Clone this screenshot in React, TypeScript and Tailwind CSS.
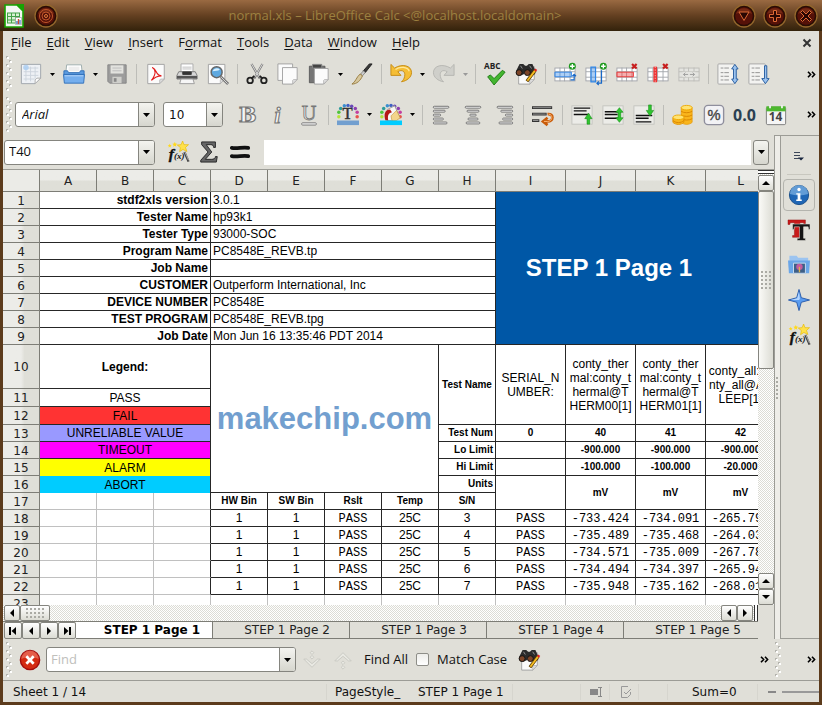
import React from 'react';

type Kids = { children?: React.ReactNode };

const ui = "font-['Open_Sans',sans-serif]";
const dv = "font-['DejaVu_Sans',sans-serif]";

function Ico({ children, size = 'size-[22px]' }: Kids & { size?: string }) {
  return (
    <svg viewBox="0 0 24 24" className={`${size} shrink-0 overflow-visible`} fill="none" aria-hidden="true">
      {children}
    </svg>
  );
}

function Tool({ label, children }: Kids & { label: string }) {
  return (
    <button type="button" aria-label={label} className="flex h-8 w-[31px] shrink-0 items-center justify-center">
      {children}
    </button>
  );
}

function Caret({ dim = false }: { dim?: boolean }) {
  return (
    <svg viewBox="0 0 5 3" className="h-[3px] w-[5px]" aria-hidden="true">
      <path d="M0 0h5L2.5 3z" fill={dim ? '#999' : '#000'} />
    </svg>
  );
}

function Drop({ label, dim }: { label: string; dim?: boolean }) {
  return (
    <button type="button" aria-label={label} className="flex h-8 w-3 shrink-0 items-center justify-center">
      <Caret dim={dim} />
    </button>
  );
}

const Sep = () => (
  <span className="flex w-2 shrink-0 justify-center">
    <span className="h-5 w-px bg-[#bdbdb8]" />
  </span>
);

function Grip() {
  const dots = Array.from({ length: 9 }, (_, i) => i);
  return (
    <svg viewBox="0 0 8 36" className="ml-[2px] h-9 w-2 shrink-0" aria-hidden="true">
      {dots.map((i) => (
        <g key={i}>
          <rect x={i % 2 ? 4 : 1} y={i * 4} width="2" height="2" fill="#b4b4ae" />
          <rect x={(i % 2 ? 4 : 1) + 1} y={i * 4 + 1} width="2" height="2" fill="#fff" />
        </g>
      ))}
    </svg>
  );
}

function More({ label }: { label: string }) {
  return (
    <button type="button" aria-label={label} className="flex h-8 w-[15px] shrink-0 items-center justify-center">
      <svg viewBox="0 0 9 7" className="h-[7px] w-[9px]" fill="none" stroke="#000" strokeWidth="1.6" aria-hidden="true">
        <path d="M1 .7 3.6 3.5 1 6.3M5 .7l2.6 2.8L5 6.3" />
      </svg>
    </button>
  );
}

const Page = ({ x = 3, y = 2, w = 17, h = 19 }: { x?: number; y?: number; w?: number; h?: number }) => (
  <>
    <path d={`M${x} ${y}h${w}v${h - 5}l-5 5h-${w - 5}z`} fill="#fbfbfb" stroke="#a0a0a0" />
    <path d={`M${x + w} ${y + h - 5}l-5 5v-4l1-1z`} fill="#ddd" stroke="#aaa" strokeWidth=".7" />
  </>
);

function CalcLogo() {
  return (
    <svg viewBox="0 0 20 24" className="h-6 w-5" aria-hidden="true">
      <path d="M1 1h12l6 6v16H1z" fill="#f4f7f4" stroke="#18a303" strokeWidth="1.6" />
      <path d="M12 0h8v8z" fill="#18a303" />
      <path d="M3 8.500h13v11H3z" fill="#43a047" />
      <path d="M4 9.500h3v2.500H4zm4 0h3v2.500H8zm4 0h3v2.500h-3zM4 13h3v2.500H4zm4 0h3v2.500H8zm-4 3.500h3v2H4zm4 0h3v2H8z" fill="#d9f0d4" />
      <path d="M11.500 13.500h6v7h-6z" fill="#fff" stroke="#999" strokeWidth=".6" />
      <path d="M13 17v3" stroke="#3b78c4" strokeWidth="1.400" />
      <path d="M14.500 15v5" stroke="#d24a2c" strokeWidth="1.400" />
      <path d="M16 16v4" stroke="#3b78c4" strokeWidth="1.200" />
    </svg>
  );
}

function Orb({ children }: Kids) {
  return (
    <svg viewBox="0 0 24 24" className="size-6" aria-hidden="true">
      <circle cx="12" cy="12" r="11" fill="#241305" stroke="#94662c" strokeWidth="1.300" />
      <circle cx="12" cy="12" r="9.300" fill="#551108" stroke="#2c0a04" />
      <path d="M4 10a8.500 8.500 0 0 1 16 0c-4-2-12-2-16 0z" fill="#8a3a1c" opacity=".6" />
      {children}
    </svg>
  );
}

function Binoculars() {
  return (
    <Ico>
      <Page x={4} y={4} w={17} h={19} />
      <path d="M5 1h4l2 2h2l2-2h4l3 7v4l-4 2-4-2-1-3h-2l-1 3-4 2-5-2V9z" fill="#2b2b2b" />
      <circle cx="4.500" cy="10.500" r="3.200" fill="#7d4528" stroke="#111" />
      <circle cx="13.500" cy="10.500" r="3.200" fill="#7d4528" stroke="#111" />
      <path d="M6 3l2 3M16 3l2 3" stroke="#999" />
      <path d="M22 8 13 20" stroke="#5a3c00" strokeWidth="3.600" />
      <path d="M22 8 13.500 19.300" stroke="#f6bd23" strokeWidth="2" />
      <path d="m21.500 7 2 1.500" stroke="#d22" strokeWidth="2.500" />
    </Ico>
  );
}

function Wizard() {
  return (
    <Ico>
      <path d="m17 0 1.500 4 5 0-3.300 3 1.500 4.500-4.300-2.300-3.700 2.500.9-4.500-3.400-2.800 4.200-.4z" fill="#ffe14a" stroke="#e8b800" strokeWidth=".7" />
      <path d="m8.500 1 .8 1.800 1.900.2-1.400 1.300.3 2-1.600-1-1.700 1 .4-2L5.800 3l1.900-.2zM3 3l.6 1.400 1.500.1-1.200 1 .4 1.500L3 6.200l-1.400.8.4-1.500-1.200-1 1.500-.1z" fill="#ffd91c" />
      <path d="m19 12 4.500 10.500" stroke="#444" strokeWidth="2.400" />
      <path d="m19.500 12 4 9" stroke="#ccc" strokeWidth=".8" />
      <text x="2" y="20" fontSize="17" fontStyle="italic" fontWeight="bold" fill="#111" stroke="#111" strokeWidth=".4" fontFamily="Liberation Serif">f</text>
      <text x="7.500" y="20" fontSize="10" fontStyle="italic" fontWeight="bold" fill="#111" fontFamily="Liberation Serif">(x)</text>
    </Ico>
  );
}

function GridIcon({ mode }: { mode: 'row' | 'col' | 'delrow' | 'delcol' | 'merge' }) {
  const red = mode === 'delrow' || mode === 'delcol';
  const hue = red ? '#e33' : '#2f86e8';
  const line = mode === 'merge' ? '#bcbcb8' : '#a3a6ab';
  return (
    <Ico>
      <rect x="1" y="5.500" width="22" height="14" fill={mode === 'merge' ? '#e4e4e0' : '#fff'} stroke={line} />
      <path d="M1 9.500h22M1 15.500h22M6.500 5v15M11.500 5v15M17.500 5v15" stroke={line} />
      {(mode === 'row' || mode === 'delrow') && <path d="M1 10h18v5H1z" fill={hue} fillOpacity=".4" stroke={hue} />}
      {mode === 'col' && <path d="M6.500 4.500h5v16h-5z" fill={hue} fillOpacity=".4" stroke={hue} strokeWidth="1.300" />}
      {mode === 'delcol' && <path d="M9 4v17" stroke="#e33" strokeWidth="4" />}
      {mode === 'delcol' && <path d="M9 4v17" stroke="#f7aaaa" strokeDasharray="1.500 1.500" />}
      {mode === 'row' && <path d="M18 18.500h4v-6m-2 2 2-2 2 2" stroke="#1768c8" strokeWidth="1.300" />}
      {mode === 'col' && <path d="M18 8v14h-5m2-2-2 2 2 2" stroke="#1768c8" strokeWidth="1.300" />}
      {mode === 'merge' && (
        <>
          <path d="M5 9.500h14v6H5z" fill="#e4e4e0" />
          <path d="M11 12.500H6m2-2-2 2 2 2m5-2h5m-2-2 2 2-2 2" stroke="#999" />
        </>
      )}
      {red && <path d="m17.500 1 5 5m0-5-5 5" stroke="#c81e1e" strokeWidth="2.400" />}
      {(mode === 'row' || mode === 'col') && (
        <>
          <circle cx="20" cy="3.500" r="3.800" fill="#1f9a1f" />
          <path d="M20 1v5m-2.500-2.500h5" stroke="#fff" strokeWidth="1.500" />
        </>
      )}
    </Ico>
  );
}

function SortIcon({ both }: { both?: boolean }) {
  return (
    <Ico>
      <rect x="1" y="1" width="18" height="22" rx="1" fill="#f3f3f1" stroke="#a5a5a5" />
      <path d="M4 5.500h3m1 0h5M4 10.500h3m1 0h5M4 14.500h3m1 0h5M4 18.500h3m1 0h5" stroke="#8d8d8d" />
      <path
        d={both ? 'm19.500 1.500 3.500 5h-2v11h2l-3.500 5-3.500-5h2v-11h-2z' : 'M18 3h2.500v14H23l-4 5.500-4-5.500h3z'}
        fill="#9cc3ef"
        stroke="#22599c"
      />
    </Ico>
  );
}

function Lines({ xs }: { xs: [number, number][] }) {
  return (
    <Ico>
      {xs.map(([x, w], i) => (
        <rect key={i} x={x + 0.5} y={2.5 + i * 4.3} width={w} height="2" rx="1" fill="#fff" stroke="#686868" />
      ))}
    </Ico>
  );
}

function VAlign({ kind }: { kind: 'top' | 'mid' | 'bot' }) {
  const y = kind === 'top' ? 4 : kind === 'mid' ? 8 : 12;
  return (
    <Ico>
      <rect x="1" y="2" width="22" height="20" fill="#ecece8" stroke="#c3c3be" />
      <path d={`M3 ${y}.500h18M3 ${y + 3}.500h14M3 ${y + 7}.500h17`} stroke="#111" strokeWidth="1.600" />
      {kind === 'top' && <path d="m19 10 4 6h-2.500v6h-3v-6H15z" fill="#2fc52f" stroke="#148714" strokeWidth=".6" />}
      {kind === 'mid' && <path d="m19 4 4 5h-2.500v6H23l-4 5-4-5h2.500V9H15z" fill="#2fc52f" stroke="#148714" strokeWidth=".6" />}
      {kind === 'bot' && <path d="m18.500 13-4-6H17V1h3v6h2.500z" fill="#2fc52f" stroke="#148714" strokeWidth=".6" />}
    </Ico>
  );
}

const rainbow = [
  [2, 14, '#b6e33a'], [2, 9, '#4cc43c'], [4, 5, '#2d9c9c'], [8, 2, '#3a8fd0'], [12, 1.5, '#3f5fc4'],
  [16, 2.5, '#6a48b8'], [20, 5, '#8e3fb0'], [22, 9, '#c23fa0'], [22, 14, '#e8524a'],
] as const;

function Rainbow({ bar, children }: Kids & { bar: string }) {
  return (
    <Ico>
      {rainbow.map(([x, y, c]) => (
        <circle key={`${x}-${y}`} cx={x} cy={y} r="1.900" fill={c} />
      ))}
      {children}
      <rect x="0" y="18" width="24" height="5" fill={bar} />
    </Ico>
  );
}

const menus: [string, string][] = [
  ['F', 'ile'], ['E', 'dit'], ['V', 'iew'], ['I', 'nsert'], ['', 'Format'], ['T', 'ools'], ['D', 'ata'], ['W', 'indow'], ['H', 'elp'],
];

function Box({ children, className }: Kids & { className: string }) {
  return (
    <div className={`flex h-[25px] shrink-0 overflow-hidden rounded-[3px] border border-[#85857f] bg-white text-[#111] ${className}`}>
      {children}
    </div>
  );
}

function BoxArrow({ label }: { label: string }) {
  return (
    <button
      type="button"
      aria-label={label}
      className="flex w-4 shrink-0 items-center justify-center border-l border-[#85857f] bg-linear-to-b from-[#f4f4f0] to-[#d6d6ce]"
    >
      <svg viewBox="0 0 7 4" className="h-1 w-[7px]" aria-hidden="true">
        <path d="M0 0h7L3.500 4z" fill="#000" />
      </svg>
    </button>
  );
}

function ScrollBtn({ label, d }: { label: string; d: string }) {
  return (
    <button
      type="button"
      aria-label={label}
      className="flex size-4 shrink-0 items-center justify-center rounded-[2px] border border-[#85857f] bg-linear-to-b from-white to-[#dcdcd4]"
    >
      <svg viewBox="0 0 10 10" className="size-[10px]" aria-hidden="true">
        <path d={d} fill="#000" />
      </svg>
    </button>
  );
}

const LEFT = 'M7 1v8L3 5z';
const RIGHT = 'M3 1v8l4-4z';
const UP = 'M1 7h8L5 3z';
const DOWN = 'M1 3h8L5 7z';
const checker = 'bg-[conic-gradient(#ffffff_25%,#dcdcd5_0_50%,#ffffff_0_75%,#dcdcd5_0)] bg-[length:2px_2px]';
const dots = 'bg-[radial-gradient(#aaaaa4_1px,transparent_1px)] bg-[length:4px_4px]';

const cell = 'border-r border-b border-[#262626] p-0 overflow-hidden whitespace-nowrap';
const pale = 'border-r border-b border-[#c0c0c0] p-0';
const small = 'text-[10px] font-bold';
const mono = "pt-px font-['Liberation_Mono',monospace]";

function RowHead({ n }: { n: number }) {
  return (
    <th scope="row" className={`border-r border-b border-[#7d7d76] bg-linear-to-r from-[#ecece8] from-50% to-[#dfdfd8] to-60% p-0 pt-px font-normal text-[#222] ${dv}`}>
      {n}
    </th>
  );
}

const info: [string, string][] = [
  ['stdf2xls version', '3.0.1'],
  ['Tester Name', 'hp93k1'],
  ['Tester Type', '93000-SOC'],
  ['Program Name', 'PC8548E_REVB.tp'],
  ['Job Name', ''],
  ['CUSTOMER', 'Outperform International, Inc'],
  ['DEVICE NUMBER', 'PC8548E'],
  ['TEST PROGRAM', 'PC8548E_REVB.tpg'],
  ['Job Date', 'Mon Jun 16 13:35:46 PDT 2014'],
];

const results: string[][] = [
  ['3', '-733.424', '-734.091', '-265.794'],
  ['4', '-735.489', '-735.468', '-264.031'],
  ['5', '-734.571', '-735.009', '-267.781'],
  ['6', '-734.494', '-734.397', '-265.941'],
  ['7', '-735.948', '-735.162', '-268.012'],
];

const testNames: string[][] = [
  ['SERIAL_N', 'UMBER:'],
  ['conty_ther', 'mal:conty_t', 'hermal@T', 'HERM00[1]'],
  ['conty_ther', 'mal:conty_t', 'hermal@T', 'HERM01[1]'],
  ['conty_all:co', 'nty_all@AS', 'LEEP[1]'],
];

function Legend({ text, color }: { text: string; color: string }) {
  return <td colSpan={3} className={`${cell} text-center ${color}`}>{text}</td>;
}

function Sheet() {
  return (
    <table className="w-[773px] table-fixed border-separate border-spacing-0 bg-white font-['Liberation_Sans',Arial,sans-serif] text-xs/[14px] text-black">
      <colgroup>
        <col className="w-[37px]" />
        {Array.from({ length: 8 }, (_, i) => <col key={i} className="w-[57px]" />)}
        {Array.from({ length: 4 }, (_, i) => <col key={i} className="w-[70px]" />)}
      </colgroup>
      <thead>
        <tr className="h-[22px]">
          <td className="border-r border-b border-[#7d7d76] bg-[#ebebe7] p-0" />
          {'ABCDEFGHIJKL'.split('').map((c) => (
            <th key={c} scope="col" className={`border-r border-b border-[#7d7d76] bg-linear-to-b from-[#ecece8] from-45% to-[#dfdfd8] to-55% p-0 font-normal text-[#222] ${dv}`}>
              {c}
            </th>
          ))}
        </tr>
      </thead>
      <tbody>
        {info.map(([k, v], i) => (
          <tr key={k} className="h-[17px]">
            <RowHead n={i + 1} />
            <td colSpan={3} className={`${cell} pr-[2px] text-right font-bold`}>{k}</td>
            <td colSpan={5} className={`${cell} pl-[2px]`}>{v}</td>
            {i === 0 && (
              <td colSpan={4} rowSpan={9} className="border-b border-[#262626] bg-[#0057a6] p-0 pr-[54px] text-center text-2xl font-bold text-white">
                STEP 1 Page 1
              </td>
            )}
          </tr>
        ))}
        <tr className="h-11">
          <RowHead n={10} />
          <td colSpan={3} className={`${cell} text-center font-bold`}>Legend:</td>
          <td colSpan={4} rowSpan={7} className={`${cell} text-center text-[31px] font-bold text-[#729fcf]`}>makechip.com</td>
          <td rowSpan={3} className={`${cell} text-center ${small}`}>Test Name</td>
          {testNames.map((lines, i) => (
            <td key={i} rowSpan={3} className={`${cell} text-center`}>
              {lines.map((l) => <div key={l}>{l}</div>)}
            </td>
          ))}
        </tr>
        <tr className="h-[18px]"><RowHead n={11} /><Legend text="PASS" color="bg-white" /></tr>
        <tr className="h-[18px]"><RowHead n={12} /><Legend text="FAIL" color="bg-[#ff3333]" /></tr>
        <tr className="h-[17px]">
          <RowHead n={13} />
          <Legend text="UNRELIABLE VALUE" color="bg-[#9999ff]" />
          <td className={`${cell} pr-[2px] text-right ${small}`}>Test Num</td>
          {['0', '40', '41', '42'].map((v) => <td key={v} className={`${cell} text-center ${small}`}>{v}</td>)}
        </tr>
        <tr className="h-[17px]">
          <RowHead n={14} />
          <Legend text="TIMEOUT" color="bg-[#ff00ff]" />
          <td className={`${cell} pr-[2px] text-right ${small}`}>Lo Limit</td>
          {['', '-900.000', '-900.000', '-900.000'].map((v, i) => <td key={i} className={`${cell} text-center ${small}`}>{v}</td>)}
        </tr>
        <tr className="h-[17px]">
          <RowHead n={15} />
          <td colSpan={3} className="border-r border-[#262626] bg-[#ffff00] p-0 text-center">ALARM</td>
          <td className={`${cell} pr-[2px] text-right ${small}`}>Hi Limit</td>
          {['', '-100.000', '-100.000', '-20.000'].map((v, i) => <td key={i} className={`${cell} text-center ${small}`}>{v}</td>)}
        </tr>
        <tr className="h-[17px]">
          <RowHead n={16} />
          <td colSpan={3} className="border-r border-[#262626] bg-[#00ccff] p-0 text-center">ABORT</td>
          <td className={`${cell} pr-[2px] text-right ${small}`}>Units</td>
          {['', 'mV', 'mV', 'mV'].map((v, i) => <td key={i} rowSpan={2} className={`${cell} text-center ${small}`}>{v}</td>)}
        </tr>
        <tr className="h-[17px]">
          <RowHead n={17} />
          <td className={pale} /><td className={pale} />
          <td className="border-r border-b border-r-[#262626] border-b-[#c0c0c0] p-0" />
          {['HW Bin', 'SW Bin', 'Rslt', 'Temp', 'S/N'].map((v) => <td key={v} className={`${cell} text-center ${small}`}>{v}</td>)}
        </tr>
        {results.map(([sn, ...vals], i) => (
          <tr key={sn} className="h-[17px]">
            <RowHead n={18 + i} />
            <td className={pale} /><td className={pale} />
            <td className="border-r border-b border-r-[#262626] border-b-[#c0c0c0] p-0" />
            <td className={`${cell} text-center`}>1</td>
            <td className={`${cell} text-center`}>1</td>
            <td className={`${cell} text-center ${mono}`}>PASS</td>
            <td className={`${cell} text-center`}>25C</td>
            <td className={`${cell} text-center`}>{sn}</td>
            <td className={`${cell} text-center ${mono}`}>PASS</td>
            {vals.map((v) => <td key={v} className={`${cell} text-center ${mono}`}>{v}</td>)}
          </tr>
        ))}
        <tr className="h-[17px]">
          <RowHead n={23} />
          {Array.from({ length: 12 }, (_, i) => <td key={i} className={pale} />)}
        </tr>
      </tbody>
    </table>
  );
}

function TitleBar() {
  return (
    <header className="flex h-[31px] shrink-0 items-center bg-linear-to-b from-[#9a6a42] via-[#644021] to-[#33220b] px-1">
      <CalcLogo />
      <button type="button" aria-label="Window menu" className="ml-[10px]">
        <Orb>
          <circle cx="12" cy="12" r="6.500" fill="none" stroke="#c0552a" />
          <circle cx="12" cy="12" r="4" fill="none" stroke="#c0552a" />
          <circle cx="12" cy="12" r="1.500" fill="none" stroke="#e07b3c" />
        </Orb>
      </button>
      <h1 className={`min-w-0 flex-1 truncate text-center text-[13px] text-[#9c8040] ${ui}`}>
        normal.xls – LibreOffice Calc &lt;@localhost.localdomain&gt;
      </h1>
      <div className="flex gap-[7px]">
        <button type="button" aria-label="Minimize"><Orb><path d="M7 8h10l-5 8.500z" fill="#2a0703" stroke="#dd6a35" /></Orb></button>
        <button type="button" aria-label="Maximize"><Orb><path d="M10.500 6.500h3v4h4v3h-4v4h-3v-4h-4v-3h4z" fill="#2a0703" stroke="#dd6a35" /></Orb></button>
        <button type="button" aria-label="Close"><Orb><path d="m8.500 6.500 3.500 3.500 3.500-3.500 2 2L14 12l3.500 3.500-2 2L12 14l-3.500 3.500-2-2L10 12 6.500 8.500z" fill="#2a0703" stroke="#dd6a35" /></Orb></button>
      </div>
    </header>
  );
}

function MenuBar() {
  return (
    <nav className={`flex h-[23px] shrink-0 items-center pr-[7px] pl-2 text-[13px] text-[#111] ${ui}`}>
      <div className="flex flex-1 gap-[15px]">
        {menus.map(([u, rest]) => (
          <button key={u + rest} type="button" className="whitespace-nowrap">
            {u ? (
              <><span className="underline underline-offset-2">{u}</span>{rest}</>
            ) : (
              <>F<span className="underline underline-offset-2">o</span>rmat</>
            )}
          </button>
        ))}
      </div>
      <button type="button" aria-label="Close document">
        <svg viewBox="0 0 10 10" className="size-[10px]" aria-hidden="true"><path d="m1.500 1.500 7 7m0-7-7 7" stroke="#333" strokeWidth="2" /></svg>
      </button>
    </nav>
  );
}

function StandardBar() {
  return (
    <div className="flex h-10 shrink-0 items-center">
      <Grip />
      <div className="ml-[2px] flex min-w-0 flex-1 items-center overflow-hidden">
        <Tool label="New">
          <Ico>
            <path d="M1.500 1.500h21v15l-6 6h-15z" fill="#eef1f5" stroke="#9da3aa" />
            <path d="M4 5.500h16M4 9.500h16M4 13.500h16M4 17.500h12M6.500 4v16M11.500 4v16M16.500 4v13" stroke="#ccd3dc" />
            <circle cx="6.500" cy="5" r="3" fill="#a9cdf2" opacity=".8" />
            <path d="m22.500 16.500-6 6v-4l2-2z" fill="#fff" stroke="#aaa" />
          </Ico>
        </Tool>
        <Drop label="New options" />
        <Tool label="Open">
          <Ico>
            <path d="M4 2h16l1 9H3z" fill="#fff" stroke="#9aa" />
            <path d="M6 4h12v5H6z" fill="#eee" />
            <path d="M1 8.500h4l1 2h12l1-2h4v4H1z" fill="#5b9be0" stroke="#2f6fb8" />
            <path d="M.500 12.500h23l-1 9.500h-21z" fill="#74aeee" stroke="#2f6fb8" />
            <path d="M2 14h20" stroke="#b9d8f8" />
          </Ico>
        </Tool>
        <Drop label="Open options" />
        <Tool label="Save">
          <Ico>
            <path d="M2 2h20v20H4l-2-2z" fill="#9c9c9c" stroke="#858585" />
            <path d="M5 2.500h14v9H5z" fill="#e2e2de" />
            <path d="M7 5.500h10M7 8.500h10" stroke="#bbb" />
            <path d="M7 15h10v7H7z" fill="#cfcfcb" /><path d="M8.500 16.500h3v4h-3z" fill="#888" />
          </Ico>
        </Tool>
        <Sep />
        <Tool label="Export as PDF">
          <Ico>
            <Page x={3} y={1.5} w={18} h={21} />
            <path d="M8 5c3 1 4 4 5 6 1 2 3 3 5 3-5 0-8 2-11 5 3-4 4-7 4-9 0-2-1-4-3-5z" stroke="#e21b1b" strokeWidth="1.200" />
          </Ico>
        </Tool>
        <Tool label="Print">
          <Ico>
            <path d="M5.500 1h13v9h-13z" fill="#fff" stroke="#aaa" /><path d="M7 4.500h10M7 6.500h10" stroke="#bbb" />
            <path d="M3 9.500h4v2h10v-2h4l2 4v4H1v-4z" fill="#d8d8d8" stroke="#777" />
            <path d="M1 14h22v3H1z" fill="#555" /><path d="M7 9h10v4H7z" fill="#333" />
            <path d="M5.500 17.500h13l1.500 5H4z" fill="#f6f6f6" stroke="#999" />
          </Ico>
        </Tool>
        <Tool label="Page preview">
          <Ico>
            <Page x={1.5} y={1.5} w={18} h={21} />
            <path d="m15 15 8 8" stroke="#777" strokeWidth="3" /><path d="m15.500 15.500 7 7" stroke="#ddd" />
            <circle cx="10.500" cy="10" r="6" fill="#5fa9e0" stroke="#666" strokeWidth="1.600" />
            <path d="M6 9a5 5 0 0 1 8-2c-2 2-5 1-8 2z" fill="#d8f0ff" />
          </Ico>
        </Tool>
        <Sep />
        <Tool label="Cut">
          <Ico>
            <path d="m6 1 9 16M18 1 9 17" stroke="#777" strokeWidth="2.400" />
            <path d="m6 1 8 14M18 1l-8 14" stroke="#eee" strokeWidth=".9" />
            <circle cx="4.500" cy="19" r="3" stroke="#222" strokeWidth="2" /><circle cx="19.500" cy="19" r="3" stroke="#222" strokeWidth="2" />
            <path d="m9 14-3 3M15 14l3 3" stroke="#222" strokeWidth="2" />
          </Ico>
        </Tool>
        <Tool label="Copy"><Ico><Page x={1} y={1} w={16} h={18} /><Page x={6} y={5} w={16} h={18} /></Ico></Tool>
        <Tool label="Paste">
          <Ico>
            <path d="M1.500 3.500h17v18h-17z" fill="#757575" stroke="#5a5a5a" /><path d="M5 1.500h10v4H5z" fill="#444" stroke="#888" />
            <Page x={7} y={6} w={15} h={17} />
          </Ico>
        </Tool>
        <Drop label="Paste options" />
        <Tool label="Clone formatting">
          <Ico>
            <path d="m23 1-7.500 9.500-2-2L20 1z" fill="#3a3a3a" stroke="#222" />
            <path d="m15.500 10.500-3 3.500-2-2 3-3.500z" fill="#ccc" stroke="#888" />
            <path d="M12.500 14c-2 5-6 9-11.500 9 4-2 5-8 9-11z" fill="#d7c79d" stroke="#96793a" />
          </Ico>
        </Tool>
        <Sep />
        <Tool label="Undo">
          <Ico>
            <path d="M1 1.500v12h11L8.500 9.500c5-3 8.500 0 7.500 5-.5 3-2 4.500-3.500 6 6-1 11-5 11-10C23.500 2.500 13 .5 5 5.500z" fill="#f5be35" stroke="#c48a12" />
            <path d="M6 7c5-3.500 13-3 15 2" stroke="#ffe89a" strokeWidth="1.400" />
          </Ico>
        </Tool>
        <Drop label="Undo options" />
        <Tool label="Redo">
          <Ico>
            <path d="M23 1.500v12H12l3.500-4c-5-3-8.500 0-7.500 5 .5 3 2 4.500 3.500 6-6-1-11-5-11-10C.5 2.500 11 .5 19 5.500z" fill="#cfcfca" stroke="#b5b5b0" />
          </Ico>
        </Tool>
        <Drop label="Redo options" dim />
        <Sep />
        <Tool label="Spelling">
          <Ico>
            <text x="0" y="7" fontSize="9" fontWeight="bold" fill="#222" fontFamily="Open Sans">ABC</text>
            <path d="m4 15 3-2 4 4 9-9 3 2-12 14z" fill="#43b52f" stroke="#1c7a13" />
          </Ico>
        </Tool>
        <Tool label="Find and replace"><Binoculars /></Tool>
        <Sep />
        <Tool label="Insert row"><GridIcon mode="row" /></Tool>
        <Tool label="Insert column"><GridIcon mode="col" /></Tool>
        <Tool label="Delete row"><GridIcon mode="delrow" /></Tool>
        <Tool label="Delete column"><GridIcon mode="delcol" /></Tool>
        <Tool label="Merge cells"><GridIcon mode="merge" /></Tool>
        <Sep />
        <Tool label="Sort"><SortIcon both /></Tool>
        <Tool label="Sort descending"><SortIcon /></Tool>
      </div>
      <More label="More standard tools" />
    </div>
  );
}

function FormatBar() {
  return (
    <div className="flex h-[41px] shrink-0 items-center">
      <Grip />
      <div className="ml-[2px] flex min-w-0 flex-1 items-center overflow-hidden">
        <Box className="w-[140px]">
          <select aria-label="Font name" className={`min-w-0 flex-1 appearance-none pl-[6px] text-[13px] italic outline-none ${ui}`}><option>Arial</option></select>
          <BoxArrow label="Choose font" />
        </Box>
        <Box className="mr-2 ml-2 w-[60px]">
          <select aria-label="Font size" className={`min-w-0 flex-1 appearance-none pl-[5px] text-xs outline-none ${dv}`}><option>10</option></select>
          <BoxArrow label="Choose size" />
        </Box>
        <Tool label="Bold"><Ico><text x="3" y="20" fontSize="23" fontWeight="bold" fill="#f4f4f4" stroke="#777" strokeWidth="1.300" fontFamily="DejaVu Serif">B</text></Ico></Tool>
        <Tool label="Italic"><Ico><text x="8" y="21" fontSize="25" fontStyle="italic" fontWeight="bold" fill="#f4f4f4" stroke="#777" strokeWidth="1.200" fontFamily="Liberation Serif">i</text></Ico></Tool>
        <Tool label="Underline">
          <Ico>
            <text x="4" y="17" fontSize="22" fill="#eee" stroke="#777" strokeWidth=".9" fontFamily="Liberation Serif">U</text>
            <rect x="4" y="20.500" width="16" height="2.500" rx="1" fill="#eee" stroke="#777" />
          </Ico>
        </Tool>
        <Sep />
        <Tool label="Font color"><Rainbow bar="#729fcf"><text x="6" y="16.500" fontSize="18" fill="#333" stroke="#333" strokeWidth=".5" fontFamily="Liberation Serif">T</text></Rainbow></Tool>
        <Drop label="Font color options" />
        <Tool label="Highlight color">
          <Rainbow bar="#00ccff">
            <path d="m8 6 8-4 5 11-8 5H8z" fill="#f6f6f6" stroke="#999" /><path d="m12 13 6-6 4 8-4 3h-5z" fill="#f3d58b" stroke="#b98b2c" strokeWidth=".6" />
            <path d="M11 6c-6 0-7 6-5 12h3c-1-5 0-8 4-9z" fill="#b51717" />
          </Rainbow>
        </Tool>
        <Drop label="Highlight options" />
        <Sep />
        <Tool label="Align left"><Lines xs={[[2, 17], [2, 13], [2, 8], [2, 11], [2, 15]]} /></Tool>
        <Tool label="Align center"><Lines xs={[[3, 17], [5, 13], [8, 7], [6, 11], [4, 15]]} /></Tool>
        <Tool label="Align right"><Lines xs={[[4, 17], [8, 13], [13, 8], [10, 11], [6, 15]]} /></Tool>
        <Sep />
        <Tool label="Wrap text">
          <Ico>
            <path d="M0 4h22M0 11h16M0 18h8" stroke="#333" strokeWidth="3" /><path d="M1 4h20M1 11h14M1 18h6" stroke="#999" />
            <path d="M17 11c7-1 7 8 0 8h-4m4-4-5 4 5 4" stroke="#c95b09" strokeWidth="3" /><path d="M18 11c5 0 5 8-1 8h-4" stroke="#ffc080" />
          </Ico>
        </Tool>
        <Sep />
        <Tool label="Align top"><VAlign kind="top" /></Tool>
        <Tool label="Center vertically"><VAlign kind="mid" /></Tool>
        <Tool label="Align bottom"><VAlign kind="bot" /></Tool>
        <Sep />
        <Tool label="Currency">
          <Ico>
            <path d="M10 4v16c3 3 9 3 12 0V4z" fill="#f9b51c" stroke="#e39400" strokeWidth=".7" />
            <path d="M10 8c3 2 9 2 12 0M10 12c3 2 9 2 12 0M10 16c3 2 9 2 12 0" stroke="#d88400" />
            <ellipse cx="16" cy="4" rx="6" ry="2.500" fill="#ffe373" stroke="#eea800" />
            <path d="M1 15v5c3 3 9 3 12 0v-5z" fill="#f9b51c" stroke="#e39400" /><path d="M1 18c3 3 9 3 12 0" stroke="#d88400" />
            <ellipse cx="7" cy="14.500" rx="6" ry="2.500" fill="#ffe373" stroke="#eea800" />
          </Ico>
        </Tool>
        <Tool label="Percent">
          <Ico><rect x="1.500" y="1.500" width="21" height="21" rx="4" fill="#f2f2f5" stroke="#8f8f9d" strokeWidth="1.500" /><text x="5" y="17.500" fontSize="16" fill="#444" stroke="#444" strokeWidth=".4" fontFamily="Liberation Sans">%</text></Ico>
        </Tool>
        <Tool label="Number"><span className="font-['Open_Sans',sans-serif] text-base font-bold text-[#2a3f52]">0.0</span></Tool>
        <Tool label="Date">
          <Ico>
            <rect x="1.500" y="3.500" width="21" height="19" rx="1.500" fill="#f5f5f5" stroke="#777" /><path d="M1.500 2.500h21V8h-21z" fill="#4db82e" />
            <path d="M5.500 1v3.500M18.500 1v3.500" stroke="#eee" strokeWidth="2" />
            <text x="4" y="18.500" fontSize="13" fontWeight="bold" fill="#444" fontFamily="Open Sans">14</text>
          </Ico>
        </Tool>
      </div>
      <More label="More formatting tools" />
    </div>
  );
}

function FormulaBar() {
  return (
    <div className="flex h-[34px] shrink-0 items-center gap-[2px] pr-[5px] pl-px">
      <Box className="w-[151px]">
        <input aria-label="Name box" defaultValue="T40" className={`min-w-0 flex-1 pl-1 text-[13px] outline-none ${ui}`} />
        <BoxArrow label="Choose range" />
      </Box>
      <div className="ml-[5px] flex">
        <Tool label="Function wizard"><Wizard /></Tool>
        <Tool label="Sum">
          <Ico><path d="M4 1h15v6h-2c0-2-1-3-3-3H9l6 8-7 8h7c2 0 4-1 4-3h2l-1 6H3v-2l8-9-7-8z" fill="#666" stroke="#222" /></Ico>
        </Tool>
        <Tool label="Formula">
          <Ico><path d="M3 7.500c6 1 12-1 18 0M3 16.500c6 1 12-1 18 0" stroke="#111" strokeWidth="4" strokeLinecap="round" /></Ico>
        </Tool>
      </div>
      <input aria-label="Formula" className="ml-[7px] h-[25px] min-w-0 flex-1 bg-white px-1 text-xs outline-none" />
      <button type="button" aria-label="Expand formula bar" className="flex h-[25px] w-4 items-center justify-center rounded-[3px] border border-[#85857f] bg-linear-to-b from-[#f4f4f0] to-[#d6d6ce]">
        <svg viewBox="0 0 7 4" className="h-1 w-[7px]" aria-hidden="true"><path d="M0 0h7L3.500 4z" /></svg>
      </button>
    </div>
  );
}

function SideBar() {
  return (
    <aside className="flex w-[39px] shrink-0 flex-col items-center border-t border-b border-l border-[#9c9c96] bg-[#e0dfd8] pr-[2px]">
      <button type="button" aria-label="Sidebar settings" className="mt-3 flex size-4 items-center justify-center">
        <svg viewBox="0 0 10 10" className="size-[10px]" aria-hidden="true"><path d="M0 1.500h6M0 4.500h6M0 7.500h5" stroke="#3c4658" /><path d="M4 6.500h6L7 9.500z" fill="#16243c" /></svg>
      </button>
      <span className="mt-[10px] h-px w-6 bg-[#c8c7bf]" />
      <div className="mt-1 flex flex-col gap-[3px]">
        <button type="button" aria-label="Properties" className="flex size-8 items-center justify-center rounded-[4px] border border-[#b4b4ae]">
          <Ico>
            <circle cx="12" cy="12" r="10.500" fill="#1f66b5" stroke="#164b88" /><path d="M2 11a10 10 0 0 1 20 0c-6 2-14 2-20 0z" fill="#7fb3e4" opacity=".7" />
            <circle cx="12" cy="6" r="1.800" fill="#fff" /><path d="M9 10h4.500v7H15v1.500H9V17h1.500v-5.500H9z" fill="#fff" />
          </Ico>
        </button>
        <button type="button" aria-label="Styles" className="flex size-8 items-center justify-center">
          <Ico>
            <path d="M0 1h19v5h-1.500L17 4h-4v14h1v2H5v-2h2V4H2.500L2 6H0z" fill="#c81a1a" stroke="#8c1010" strokeWidth=".5" />
            <path d="M5 5.500h19v6h-1.500L22 8.500h-5V21h2v2.500h-9V21h2.500V8.500H7l-.5 3H5z" fill="#151515" stroke="#e0dfd8" strokeWidth=".6" />
          </Ico>
        </button>
        <button type="button" aria-label="Gallery" className="flex size-8 items-center justify-center">
          <Ico>
            <path d="M1.500 2h8l1.500 2h11v5H1.500z" fill="#9cc4f0" /><path d="M0 7h24l-1 14H1z" fill="#6aa6e8" />
            <path d="M6 10h13v11H6z" fill="#3d5f88" stroke="#cfe0f2" /><circle cx="12.500" cy="14" r="3.500" fill="#c25ba0" /><path d="M12.500 14v6" stroke="#dcb04a" strokeWidth="1.500" />
          </Ico>
        </button>
        <button type="button" aria-label="Navigator" className="flex size-8 items-center justify-center">
          <Ico><path d="m12 .5 2.500 9L23.500 12l-9 2.500-2.500 9-2.500-9L.5 12l9-2.500z" fill="#5a9cf0" stroke="#2456a8" /><path d="m12 3 1 8-1 1-9 0 7-2z" fill="#b4d6ff" /></Ico>
        </button>
        <button type="button" aria-label="Functions" className="flex size-8 items-center justify-center"><Wizard /></button>
      </div>
    </aside>
  );
}

function SheetTabs() {
  const btn = 'flex w-[18px] items-center justify-center rounded-[2px] border border-[#85857f] bg-linear-to-b from-white to-[#dcdcd4]';
  const nav: [string, string][] = [
    ['First sheet', 'M1 1h2v8H1zM8 1v8L3.500 5z'], ['Previous sheet', LEFT], ['Next sheet', RIGHT], ['Last sheet', 'M7 1h2v8H7zM2 1v8l4.500-4z'],
  ];
  return (
    <div className="mr-4 flex h-[18px] shrink-0 overflow-hidden border-t border-[#7d7d76]">
      <div className="flex shrink-0 pl-px">
        {nav.map(([l, d]) => (
          <button key={l} type="button" aria-label={l} className={btn}><svg viewBox="0 0 10 10" className="size-[10px]" aria-hidden="true"><path d={d} /></svg></button>
        ))}
      </div>
      <div className={`flex min-w-0 flex-1 text-xs/[15px] ${dv}`}>
        {[1, 2, 3, 4, 5].map((n) => (
          <button
            key={n}
            type="button"
            className={`w-[137px] shrink-0 border-r border-b border-[#7d7d76] whitespace-nowrap ${n === 1 ? 'bg-white pl-4 font-bold text-black' : 'pl-3 text-[#222]'}`}
          >
            STEP 1 Page {n}
          </button>
        ))}
      </div>
    </div>
  );
}

function FindBar() {
  return (
    <div className={`flex h-[41px] shrink-0 items-center text-[13px] text-[#111] ${ui}`}>
      <Grip />
      <button type="button" aria-label="Close find bar" className="ml-[6px]">
        <Ico><circle cx="12" cy="12" r="10.500" fill="#d42a12" stroke="#a30d0d" strokeWidth="1.500" /><path d="M2.500 11a9.500 9.500 0 0 1 19 0c-5-3-14-3-19 0z" fill="#f08070" opacity=".6" /><path d="m8 8 8 8m0-8-8 8" stroke="#fff" strokeWidth="3" /></Ico>
      </button>
      <Box className="ml-[5px] w-[250px]">
        <input aria-label="Find" placeholder="Find" className="min-w-0 flex-1 pl-1 outline-none placeholder:text-[#c0c0bc]" />
        <BoxArrow label="Search history" />
      </Box>
      <Tool label="Find next"><Ico><path d="m3 11 9 9 9-9-3 0-6 5-6-5zM12 2l2 2-2 2-2-2zm0 5 2 2-2 2-2-2z" fill="#e8e8e2" stroke="#c8c8c2" /></Ico></Tool>
      <Tool label="Find previous"><Ico><path d="m3 13 9-9 9 9-3 0-6-5-6 5zM12 22l2-2-2-2-2 2zm0-5 2-2-2-2-2 2z" fill="#e8e8e2" stroke="#c8c8c2" /></Ico></Tool>
      <button type="button" className="mr-2 ml-[6px] whitespace-nowrap">Find All</button>
      <label className="flex items-center gap-2 whitespace-nowrap">
        <input type="checkbox" className="size-[13px] appearance-none rounded-[2px] border border-[#8e8e88] bg-linear-to-b from-[#eeeeea] to-white" />
        Match Case
      </label>
      <span className="ml-[6px]"><Tool label="Find and replace"><Binoculars /></Tool></span>
      <span className="flex-1" />
      <More label="More find tools" />
      <Grip />
      <span className="w-[22px]" />
      <More label="More tools" />
    </div>
  );
}

function StatusBar() {
  const part = 'flex h-4 shrink-0 items-center border-l border-[#d6d5ce] whitespace-nowrap';
  return (
    <footer className={`flex h-[22px] shrink-0 items-center border-t border-[#9c9c96] text-xs text-[#111] ${dv}`}>
      <span className="min-w-0 flex-1 pl-[10px] whitespace-nowrap">Sheet 1 / 14</span>
      <span className={`${part} w-[186px] pl-2`}>
        <span className="w-[83px]">PageStyle_</span>
        STEP 1 Page 1
      </span>
      <span className={`${part} w-[68px]`} />
      <span className={`${part} w-[29px] pl-2`}>
        <svg viewBox="0 0 14 12" className="h-3 w-[14px]" aria-hidden="true"><path d="M1 3h8v6H1z" fill="#888" /><path d="M9 1.500h4M9 10.500h4M11.500 1v10" stroke="#888" /></svg>
      </span>
      <span className={`${part} w-[29px] pl-[10px]`}>
        <svg viewBox="0 0 12 12" className="size-3" fill="none" stroke="#999" aria-hidden="true"><path d="M8 .5H1.500v11h6l3-3V6M4 6l2 2 5-5" /></svg>
      </span>
      <span className={`${part} w-[29px]`} />
      <span className={`${part} w-[90px] pl-6`}>Sum=0</span>
      <span className={`${part} w-[62px] gap-[6px] pl-[10px]`}>
        <span className="h-[2px] w-2 bg-[#888]" />
        <span className="h-[2px] flex-1 bg-[#999]" />
      </span>
    </footer>
  );
}

export default function App() {
  return (
    <div className="flex h-screen min-h-96 flex-col overflow-hidden bg-[#5c3b1c]">
      <TitleBar />
      <div className="mx-[3px] mb-[3px] flex min-h-0 flex-1 flex-col bg-[#e0dfd8]">
        <MenuBar />
        <StandardBar />
        <FormatBar />
        <div className="flex min-h-0 flex-1">
          <main className="flex min-w-0 flex-1 flex-col">
            <FormulaBar />
            <div className="flex min-h-0 flex-1 border-t border-[#9c9c96]">
              <div className="min-w-0 flex-1 overflow-hidden"><Sheet /></div>
              <div className={`flex w-4 shrink-0 flex-col ${checker}`}>
                <span className="mb-px h-1 border-y border-[#333] bg-white" />
                <ScrollBtn label="Scroll up" d={UP} />
                <div className="flex h-[178px] shrink-0 items-center justify-center rounded-[2px] border border-[#85857f] bg-linear-to-r from-[#fafaf7] to-[#dcdcd4]">
                  <span className={`h-5 w-3 ${dots}`} />
                </div>
                <span className="flex-1" />
                <ScrollBtn label="Scroll up one row" d={UP} />
                <ScrollBtn label="Scroll down" d={DOWN} />
              </div>
            </div>
            <div className={`mr-4 flex h-4 shrink-0 pl-px ${checker}`}>
              <ScrollBtn label="Scroll left" d={LEFT} />
              <div className="flex w-[30px] items-center justify-center rounded-[2px] border border-[#85857f] bg-linear-to-b from-white to-[#dcdcd4]">
                <span className={`h-3 w-5 ${dots}`} />
              </div>
              <span className="flex-1" />
              <ScrollBtn label="Scroll left one column" d={LEFT} />
              <ScrollBtn label="Scroll right" d={RIGHT} />
              <span className="ml-px w-1 border-x border-[#333] bg-white" />
            </div>
            <SheetTabs />
          </main>
          <div className="flex w-[6px] shrink-0 items-center border-t border-l border-[#9c9c96] bg-[#eeede8]">
            <span className={`h-6 w-1 ${dots}`} />
          </div>
          <SideBar />
        </div>
        <FindBar />
        <StatusBar />
      </div>
    </div>
  );
}
